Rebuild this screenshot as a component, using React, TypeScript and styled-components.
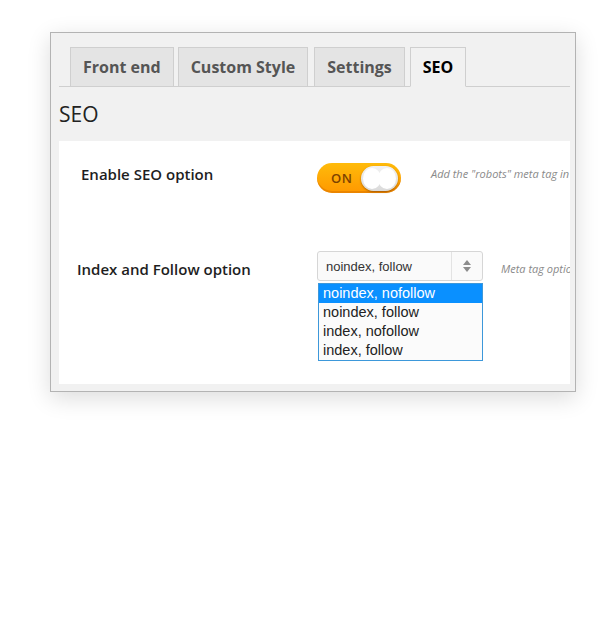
import React from "react";
import styled, { createGlobalStyle } from "styled-components";

const GlobalStyle = createGlobalStyle`
  body {
    margin: 0;
    background: #ffffff;
    font-family: "Open Sans", "Liberation Sans", sans-serif;
  }
`;

const Page = styled.div`
  width: 600px;
  height: 627px;
  padding: 32px 0 0 50px;
  box-sizing: border-box;
`;

const Window = styled.div`
  width: 526px;
  height: 360px;
  box-sizing: border-box;
  border: 1px solid #b3b3b3;
  background: #f1f1f1;
  box-shadow: 0 6px 22px rgba(0, 0, 0, 0.14);
  padding: 13px 5px 7px 8px;
  display: flex;
  flex-direction: column;
`;

const TabBar = styled.div`
  display: flex;
  align-items: flex-end;
  padding-left: 11px;
  border-bottom: 1px solid #cfcfcf;
  height: 40px;
`;

const Tab = styled.div<{ $active?: boolean; $gap: number }>`
  height: 40px;
  box-sizing: border-box;
  margin-right: ${(p) => p.$gap}px;
  margin-bottom: -1px;
  padding: 0 12px;
  display: flex;
  align-items: center;
  font-size: 16px;
  font-weight: 700;
  color: ${(p) => (p.$active ? "#000000" : "#555555")};
  background: ${(p) => (p.$active ? "#f1f1f1" : "#e4e4e4")};
  border: 1px solid #cfcfcf;
  border-bottom-color: ${(p) => (p.$active ? "#f1f1f1" : "#cfcfcf")};
`;

const Heading = styled.h2`
  margin: 0;
  height: 54px;
  display: flex;
  align-items: center;
  font-size: 21px;
  font-weight: 400;
  color: #222222;
`;

const Panel = styled.div`
  flex: 1;
  background: #ffffff;
  padding-top: 22px;
  overflow: hidden;
`;

const Row = styled.div<{ $indent: number; $height: number }>`
  display: flex;
  align-items: flex-start;
  padding-left: ${(p) => p.$indent}px;
  height: ${(p) => p.$height}px;
`;

const Label = styled.div<{ $width: number; $shift: number }>`
  width: ${(p) => p.$width}px;
  flex-shrink: 0;
  height: 30px;
  margin-top: ${(p) => p.$shift}px;
  display: flex;
  align-items: center;
  font-size: 15px;
  font-weight: 600;
  color: #1e1e1e;
`;

const Hint = styled.div<{ $gap: number; $top: number }>`
  margin-left: ${(p) => p.$gap}px;
  margin-top: ${(p) => p.$top}px;
  white-space: nowrap;
  font-size: 11px;
  font-style: italic;
  color: #8a8a8a;
`;

const Toggle = styled.div`
  width: 84px;
  height: 30px;
  box-sizing: border-box;
  flex-shrink: 0;
  border-radius: 15px;
  background: linear-gradient(#ffbb0a, #ff9800);
  box-shadow: inset 0 -2px 0 rgba(210, 110, 0, 0.45);
  display: flex;
  align-items: center;
  justify-content: space-between;
  padding: 0 3px 0 14px;
`;

const ToggleText = styled.span`
  font-size: 13px;
  font-weight: 600;
  letter-spacing: 0.5px;
  color: #7d4200;
`;

const Knob = styled.div`
  width: 37px;
  height: 25px;
  border-radius: 13px;
  background: linear-gradient(#f2f2f2, #dadada);
  box-shadow: 0 1px 2px rgba(120, 60, 0, 0.6);
  display: flex;
  align-items: center;
  justify-content: center;
`;

const SelectWrap = styled.div`
  position: relative;
  flex-shrink: 0;
`;

const Select = styled.div`
  width: 166px;
  height: 30px;
  box-sizing: border-box;
  border: 1px solid #d6d6d6;
  border-radius: 3px;
  background: #fafafa;
  display: flex;
  align-items: center;
  font-family: "Liberation Sans", Arial, sans-serif;
  font-size: 13px;
  color: #333333;
`;

const SelectValue = styled.span`
  flex: 1;
  padding-left: 8px;
`;

const SelectArrow = styled.div`
  width: 30px;
  height: 100%;
  border-left: 1px solid #e3e3e3;
  display: flex;
  align-items: center;
  justify-content: center;
`;

const OptionList = styled.ul`
  position: absolute;
  top: 32px;
  left: 1px;
  width: 165px;
  box-sizing: border-box;
  margin: 0;
  padding: 0;
  list-style: none;
  border: 1px solid #3d98da;
  background: #fbfbfb;
`;

const Option = styled.li<{ $selected?: boolean }>`
  height: 19px;
  line-height: 19px;
  padding-left: 4px;
  font-family: "Liberation Sans", Arial, sans-serif;
  font-size: 14.5px;
  color: ${(p) => (p.$selected ? "#ffffff" : "#222222")};
  background: ${(p) => (p.$selected ? "#0a90ff" : "transparent")};
`;

const tabs = [
  { name: "Front end", gap: 4 },
  { name: "Custom Style", gap: 6 },
  { name: "Settings", gap: 5 },
  { name: "SEO", gap: 0, active: true },
];

const options = ["noindex, nofollow", "noindex, follow", "index, nofollow", "index, follow"];

export default function App() {
  return (
    <>
      <GlobalStyle />
      <Page>
        <Window>
          <TabBar>
            {tabs.map((t) => (
              <Tab key={t.name} $gap={t.gap} $active={t.active}>
                {t.name}
              </Tab>
            ))}
          </TabBar>
          <Heading>SEO</Heading>
          <Panel>
            <Row $indent={22} $height={88}>
              <Label $width={236} $shift={-4}>Enable SEO option</Label>
              <Toggle>
                <ToggleText>ON</ToggleText>
                <Knob>
                  <svg width="35" height="23" viewBox="0 0 35 23">
                    <ellipse cx="10" cy="11.5" rx="9" ry="10.5" fill="#ffffff" />
                    <ellipse cx="25" cy="11.5" rx="9" ry="10.5" fill="#ffffff" />
                  </svg>
                </Knob>
              </Toggle>
              <Hint $gap={30} $top={3}>Add the "robots" meta tag in</Hint>
            </Row>
            <Row $indent={18} $height={130}>
              <Label $width={240} $shift={3}>Index and Follow option</Label>
              <SelectWrap>
                <Select>
                  <SelectValue>noindex, follow</SelectValue>
                  <SelectArrow>
                    <svg width="10" height="14" viewBox="0 0 10 14">
                      <path d="M5 1 L9 6 H1 Z" fill="#8c8c8c" />
                      <path d="M5 13 L9 8 H1 Z" fill="#8c8c8c" />
                    </svg>
                  </SelectArrow>
                </Select>
                <OptionList>
                  {options.map((o, i) => (
                    <Option key={o} $selected={i === 0}>
                      {o}
                    </Option>
                  ))}
                </OptionList>
              </SelectWrap>
              <Hint $gap={18} $top={10}>Meta tag optio</Hint>
            </Row>
          </Panel>
        </Window>
      </Page>
    </>
  );
}
